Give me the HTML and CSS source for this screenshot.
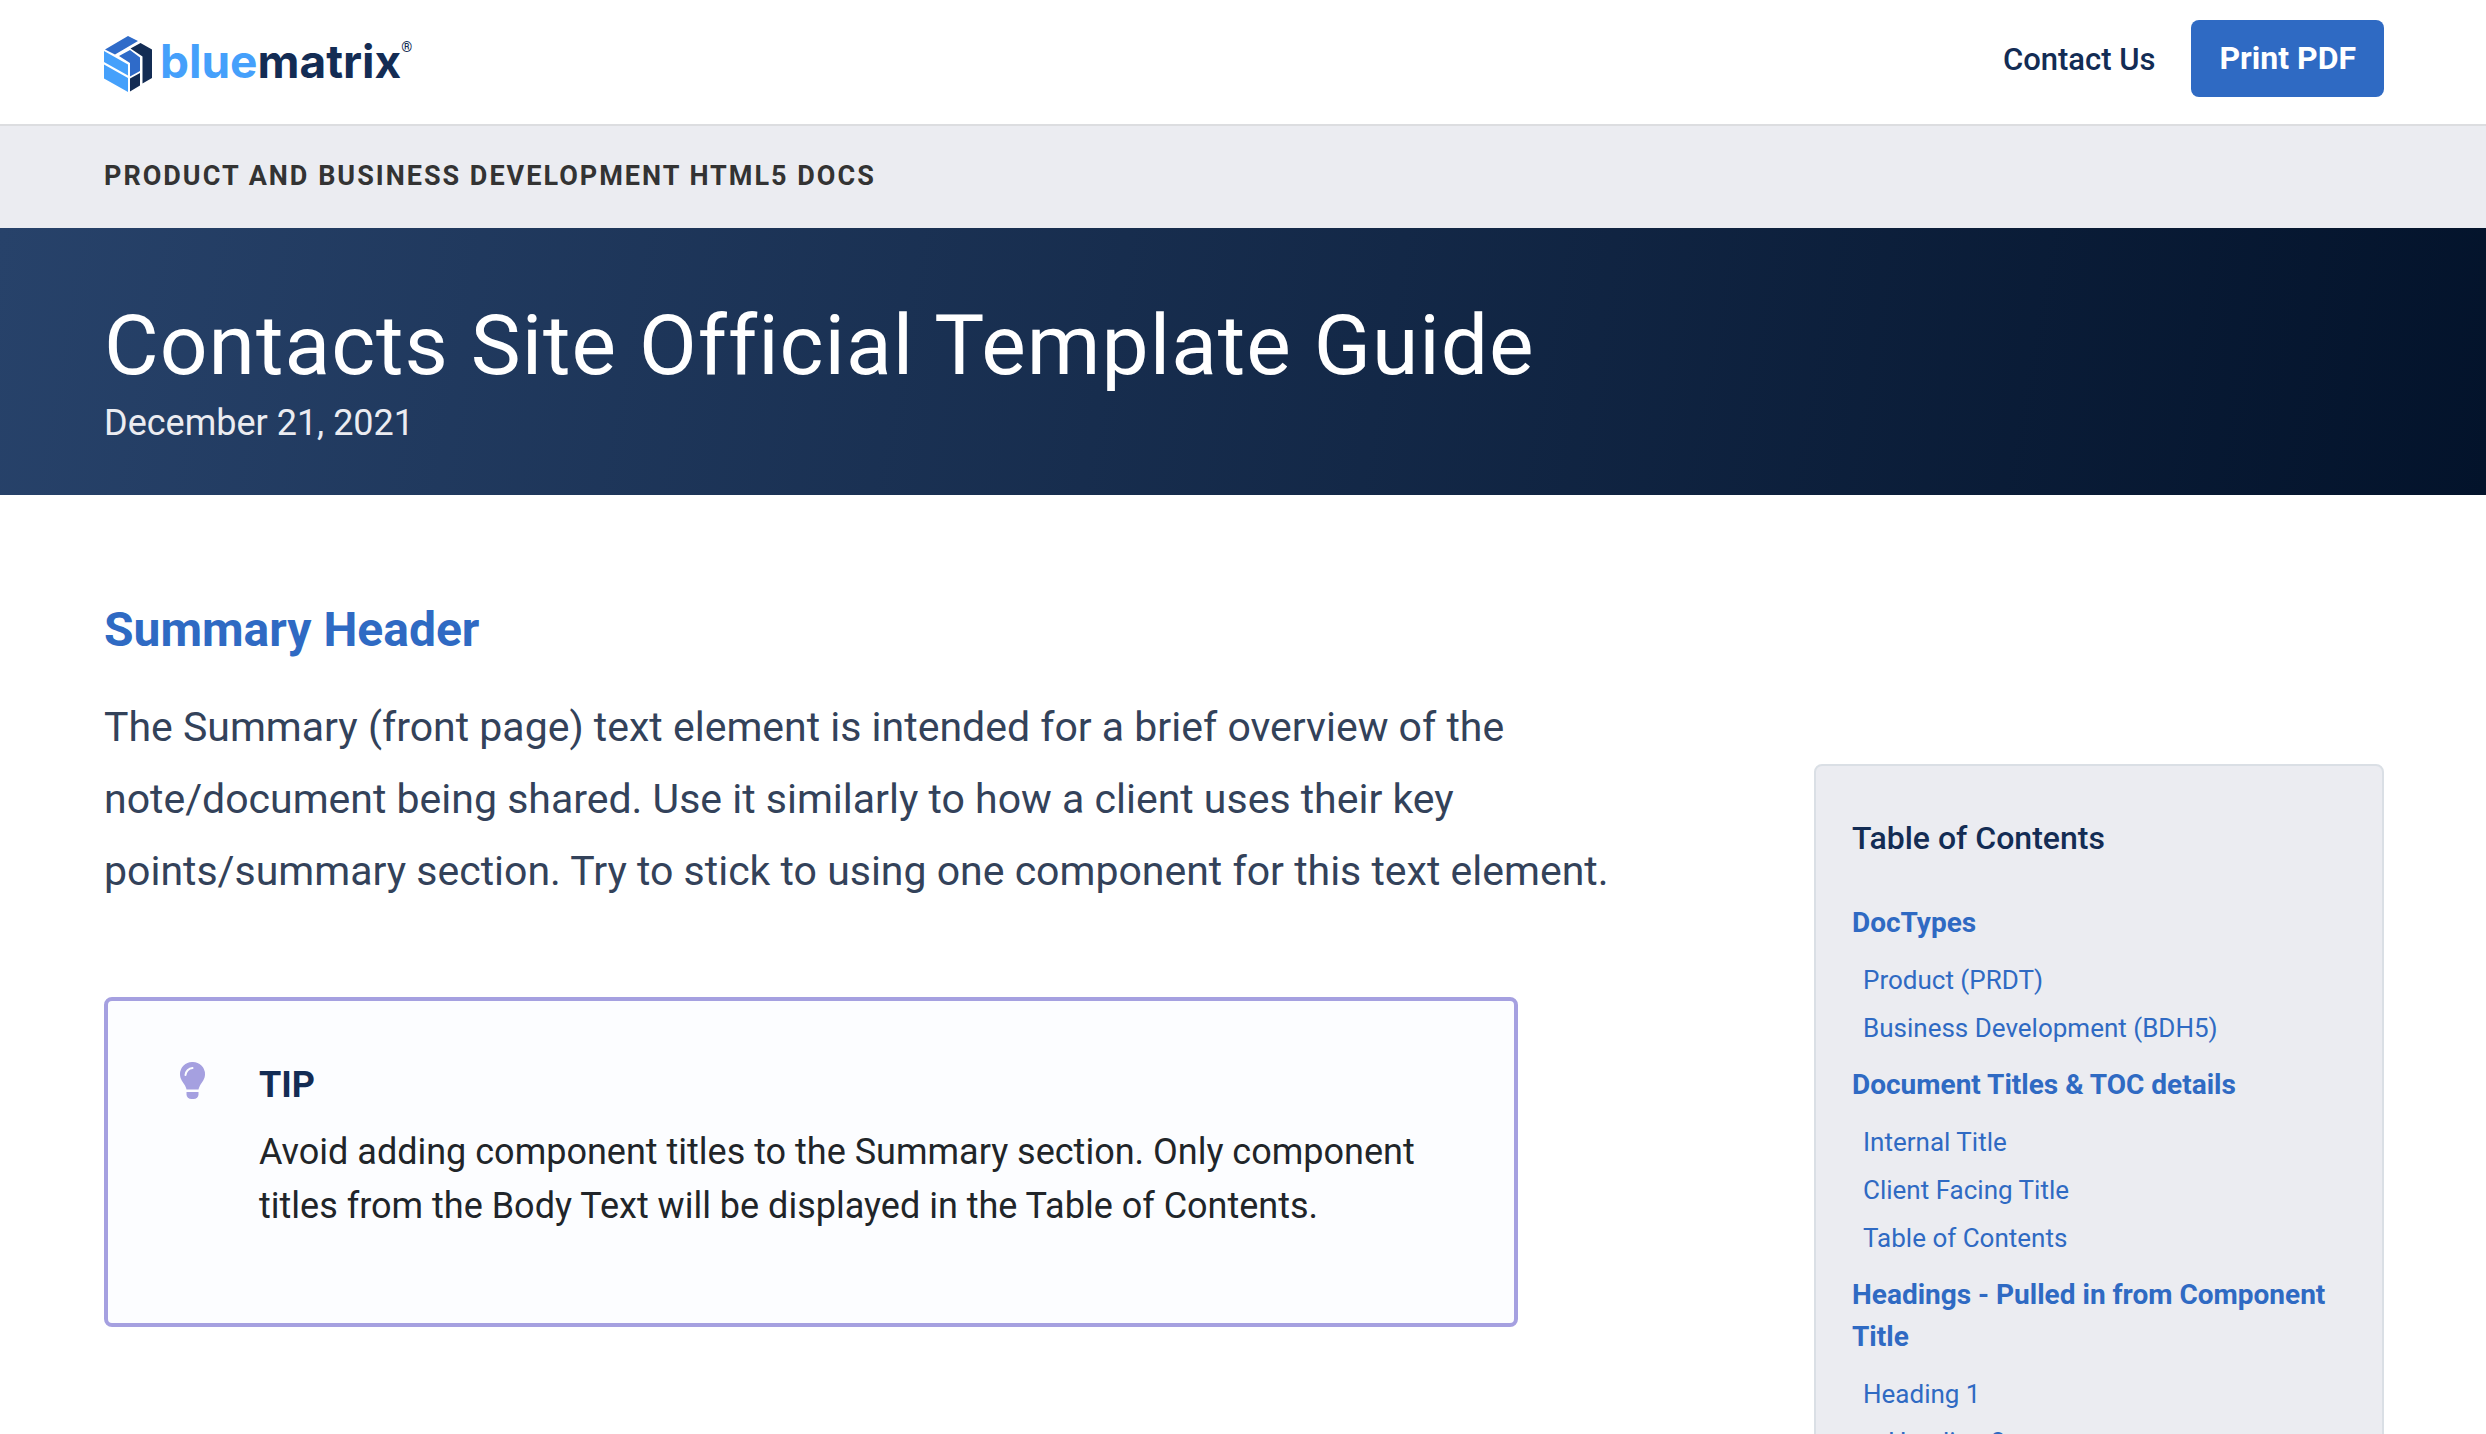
FILE: index.html
```html
<!DOCTYPE html>
<html lang="en">
<head>
<meta charset="utf-8">
<title>Contacts Site Official Template Guide</title>
<link rel="stylesheet" href="styles.css">
</head>
<body>
<header class="topbar">
  <a class="logo" href="#" aria-label="bluematrix home">
    <svg class="logo-mark" viewBox="0 0 48 56" aria-hidden="true">
      <path fill="#2f6bc9" d="M24 0 34 5 11 18.500 1 13.500zM15 20 26 14 36 21.500V35L26 40.500V27z"/>
      <path fill="#45a0fb" d="M0 15 24 28.500V39.500L0 26zM0 28.500 24 42V56L0 42.500z"/>
      <path fill="#132c54" d="M26.500 12.500 36.500 7 48 13.500V42L38.500 47.500V20.500zM26 42.500 36 37V49.500L26 55.500z"/>
    </svg>
    <span class="logo-text"><span class="logo-blue">blue</span>matrix</span><span class="logo-reg">®</span>
  </a>
  <nav class="topnav">
    <a class="contact" href="#">Contact Us</a>
    <button class="print" type="button">Print PDF</button>
  </nav>
</header>
<div class="category">Product and Business Development HTML5 Docs</div>
<section class="hero">
  <h1 class="hero-title">Contacts Site Official Template Guide</h1>
  <p class="hero-date">December 21, 2021</p>
</section>
<div class="layout">
  <main class="content">
    <h2 class="summary-title">Summary Header</h2>
    <p class="summary-text">The Summary (front page) text element is intended for a brief overview of the note/document being shared. Use it similarly to how a client uses their key points/summary section. Try to stick to using one component for this text element.</p>
    <section class="tip">
      <svg class="tip-icon" viewBox="0 0 25 37" aria-hidden="true">
        <path fill="#a5a0e0" d="M12.500 0A12.300 12.300 0 0 1 25 12.500C25 17 22 20 20 23.500Q19 25.500 18.500 27.500H6.500Q6 25.500 5 23.500C3 20 0 17 0 12.500A12.300 12.300 0 0 1 12.500 0zM6.500 30H18.500V32.500A5 4.500 0 0 1 13.500 37H11.500A5 4.500 0 0 1 6.500 32.500z"/>
        <path fill="none" stroke="#fcfdff" stroke-width="2" stroke-linecap="round" d="M5.500 13A7.500 7.500 0 0 1 12.500 6"/>
      </svg>
      <div class="tip-body">
        <h3 class="tip-title">TIP</h3>
        <p class="tip-text">Avoid adding component titles to the Summary section. Only component titles from the Body Text will be displayed in the Table of Contents.</p>
      </div>
    </section>
  </main>
  <aside class="toc">
    <h2 class="toc-title">Table of Contents</h2>
    <nav class="toc-nav">
      <a class="toc-head" href="#">DocTypes</a>
      <a class="toc-item" href="#">Product (PRDT)</a>
      <a class="toc-item" href="#">Business Development (BDH5)</a>
      <a class="toc-head" href="#">Document Titles &amp; TOC details</a>
      <a class="toc-item" href="#">Internal Title</a>
      <a class="toc-item" href="#">Client Facing Title</a>
      <a class="toc-item" href="#">Table of Contents</a>
      <a class="toc-head" href="#">Headings - Pulled in from Component Title</a>
      <a class="toc-item" href="#">Heading 1</a>
      <a class="toc-item toc-sub" href="#">Heading 2</a>
    </nav>
  </aside>
</div>
</body>
</html>
```
FILE: styles.css
```css
* { box-sizing: border-box; margin: 0; }
html { height: 100%; overflow: hidden; }
body { height: 100%; overflow: hidden; font-family: Roboto, sans-serif; color: #212529; background: #fff; }
a { text-decoration: none; color: #2f6ac3; }

.topbar { display: flex; justify-content: space-between; align-items: flex-start; padding: 20px 102px 27px 104px; border-bottom: 2px solid #dcdde0; }
.logo { display: flex; align-items: flex-start; padding-top: 16px; }
.logo-mark { width: 48px; height: 56px; margin-right: 8px; }
.logo-text { font: 700 46px/50px Inter, sans-serif; color: #132c54; }
.logo-blue { color: #45a0fb; }
.logo-reg { font: 500 14px/22px Roboto, sans-serif; color: #132c54; }
.topnav { display: flex; align-items: flex-start; gap: 36px; }
.contact { padding-top: 20px; font-size: 31px; line-height: 40px; font-weight: 500; color: #132c54; }
.print { padding: 18px 28px 19px; border: 0; border-radius: 8px; background: #2f6ac3; color: #fff; font: 700 32px/40px Roboto, sans-serif; }

.category { padding: 30px 104px 32px; background: #ebecf1; color: #333; font-size: 27px; line-height: 40px; font-weight: 700; letter-spacing: 2px; text-transform: uppercase; }

.hero { padding: 64px 104px 49px; background: linear-gradient(100deg, #27426a, #03132b); color: #fff; }
.hero-title { font-size: 84px; line-height: 108px; font-weight: 400; letter-spacing: 1px; }
.hero-date { font-size: 36px; line-height: 46px; color: #ebecf1; }

.layout { display: flex; justify-content: space-between; align-items: flex-start; padding: 103px 102px 0 104px; }
.content { width: 68%; }
.summary-title { font-size: 48px; line-height: 64px; font-weight: 700; color: #2f6ac3; }
.summary-text { margin-top: 29px; font-size: 41px; line-height: 72px; color: #33425a; }
.tip { display: flex; max-width: 1414px; margin-top: 90px; padding: 57px 72px 90px; border: 4px solid #a5a0e0; border-radius: 8px; background: #fcfdff; }
.tip-icon { flex: none; width: 25px; height: 37px; margin: 4px 54px 0 0; }
.tip-title { font-size: 36px; line-height: 54px; color: #132c54; }
.tip-text { margin-top: 13px; font-size: 36px; line-height: 54px; }

.toc { width: 570px; margin-top: 166px; padding: 48px 36px; border: 2px solid #dadfe5; border-radius: 8px; background: #ebecf1; }
.toc-title { font-size: 32px; line-height: 48px; font-weight: 500; color: #132c54; }
.toc-nav { display: flex; flex-direction: column; margin-top: 28px; }
.toc-head { padding: 12px 0; font-size: 28px; line-height: 42px; font-weight: 700; }
.toc-item { padding-left: 11px; font-size: 26px; line-height: 48px; }
.toc-sub { padding-left: 36px; }
```
